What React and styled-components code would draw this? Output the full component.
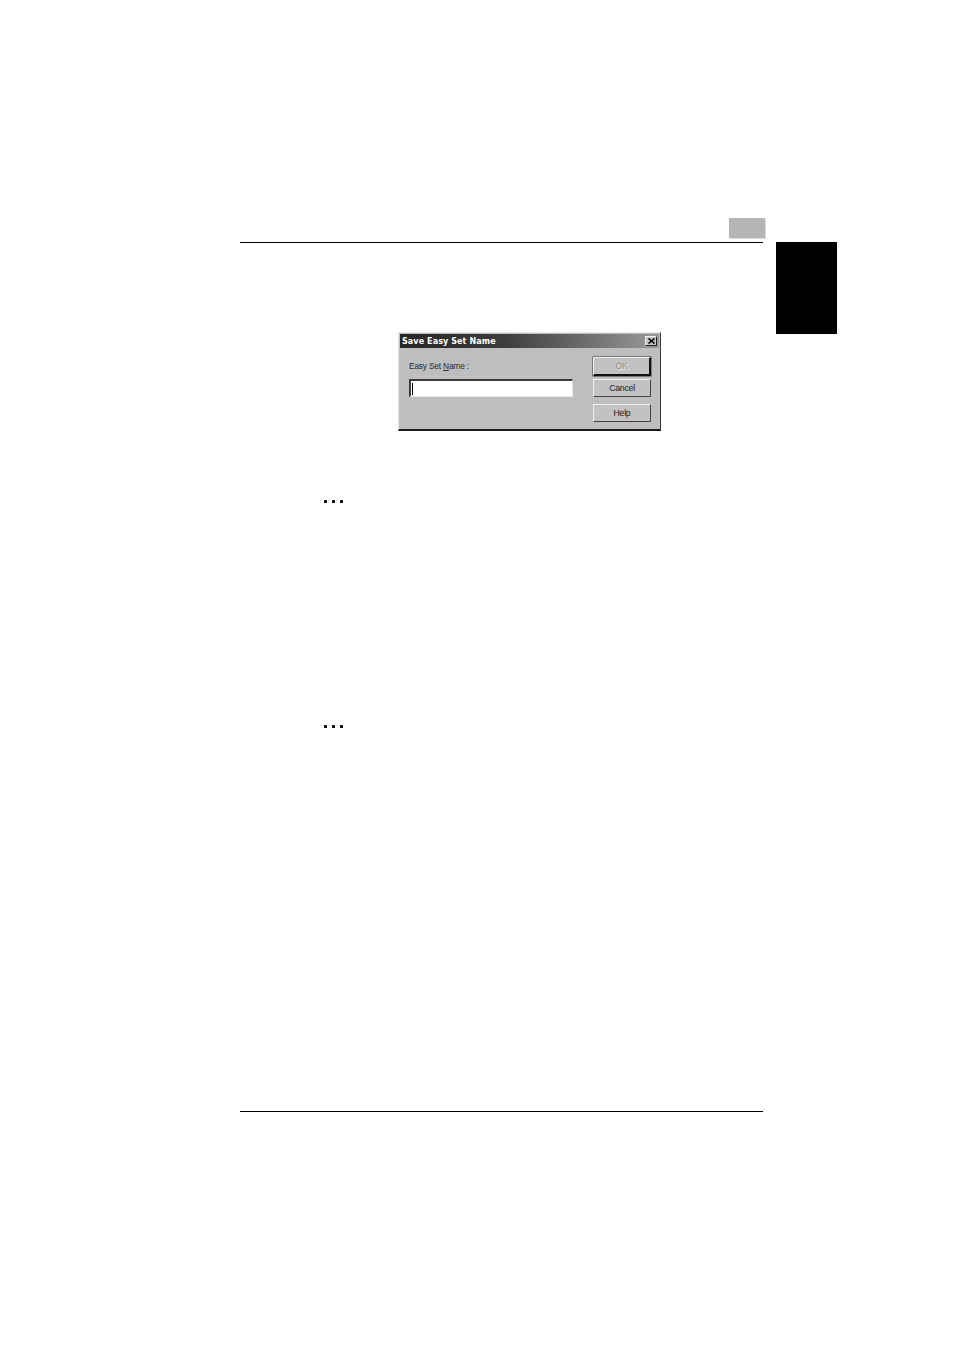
import React from 'react'
import styled, { createGlobalStyle } from 'styled-components'

const GlobalStyle = createGlobalStyle`
    html, body {
        margin: 0;
        padding: 0;
        background: #fff;
    }
    body {
        font-family: "Liberation Sans", Arial, sans-serif;
    }
`

function Dots({ second }) {
    return (
        <DotsRow $second={second}>
            <Dot />
            <Dot />
            <Dot />
        </DotsRow>
    )
}

function App() {
    return (
        <PageStyled>
            <GlobalStyle />
            <div className="column">
                <Header>
                    <PageNumberBox />
                </Header>

                <Dialog>
                    <TitleBar>
                        <span>Save Easy Set Name</span>
                        <CloseButton>
                            <svg width="7" height="6" viewBox="0 0 7 6">
                                <path d="M0.5 0.5 L6.5 5.5 M6.5 0.5 L0.5 5.5" stroke="#000" strokeWidth="1.6" />
                            </svg>
                        </CloseButton>
                    </TitleBar>
                    <DialogBody>
                        <div className="fields">
                            <Label>Easy Set <u>N</u>ame :</Label>
                            <TextInput>
                                <Caret />
                            </TextInput>
                        </div>
                        <div className="buttons">
                            <Button $default $disabled>OK</Button>
                            <Button>Cancel</Button>
                            <Button $spaced>Help</Button>
                        </div>
                    </DialogBody>
                </Dialog>

                <Dots />
                <Dots second />

                <Footer />
            </div>
            <div className="side">
                <ChapterTab />
            </div>
        </PageStyled>
    )
}

const PageStyled = styled.div`
    width: 954px;
    height: 1350px;
    display: flex;
    padding-left: 240px;
    box-sizing: border-box;
    overflow: hidden;

    .column {
        width: 523px;
        display: flex;
        flex-direction: column;
    }

    .side {
        margin-left: 13px;
        padding-top: 242px;
    }
`

const Header = styled.div`
    height: 243px;
    border-bottom: 1px solid #000;
    box-sizing: border-box;
    display: flex;
    justify-content: flex-end;
    align-items: flex-end;
    padding-bottom: 4px;
`

const PageNumberBox = styled.div`
    width: 36px;
    height: 20px;
    margin-right: -2px;
    background: #b5b5b5;
    box-shadow: 1px 1px 0 #d9d9d9;
`

const ChapterTab = styled.div`
    width: 61px;
    height: 92px;
    background: #000;
`

const Dialog = styled.div`
    margin: 89px 0 0 158px;
    width: 263px;
    height: 99px;
    box-sizing: border-box;
    background: #bebebe;
    border-top: 1px solid #e8e8e8;
    border-left: 1px solid #e8e8e8;
    border-right: 1px solid #3a3a3a;
    border-bottom: 2px solid #1a1a1a;
    padding: 1px;
    display: flex;
    flex-direction: column;
`

const TitleBar = styled.div`
    height: 14px;
    background: linear-gradient(to right, #262626 0%, #3c3c3c 40%, #9a9a9a 100%);
    display: flex;
    align-items: center;
    justify-content: space-between;
    padding: 0 2px 0 2px;

    span {
        font-family: "DejaVu Sans", Verdana, sans-serif;
        font-weight: bold;
        font-size: 8px;
        color: #fff;
        letter-spacing: 0.1px;
    }
`

const CloseButton = styled.div`
    width: 12px;
    height: 10px;
    box-sizing: border-box;
    background: #c4c4c4;
    border-top: 1px solid #f2f2f2;
    border-left: 1px solid #f2f2f2;
    border-right: 1px solid #222;
    border-bottom: 1px solid #222;
    display: flex;
    align-items: center;
    justify-content: center;
`

const DialogBody = styled.div`
    flex: 1;
    display: flex;
    justify-content: space-between;
    padding: 9px 8px 0 9px;

    .fields {
        display: flex;
        flex-direction: column;
    }

    .buttons {
        display: flex;
        flex-direction: column;
        gap: 3px;
    }
`

const Label = styled.div`
    font-size: 8.4px;
    color: #2a2a2a;
    letter-spacing: -0.2px;
    height: 12px;
    line-height: 12px;
    margin-top: 3px;

    u {
        text-decoration-thickness: 1px;
        text-underline-offset: 1px;
    }
`

const TextInput = styled.div`
    margin-top: 7px;
    width: 164px;
    height: 18px;
    box-sizing: border-box;
    background: #fff;
    border-top: 2px solid #3c3c3c;
    border-left: 2px solid #3c3c3c;
    border-right: 1px solid #e6e6e6;
    border-bottom: 1px solid #e6e6e6;
    display: flex;
    align-items: center;
    padding-left: 1px;
`

const Caret = styled.div`
    width: 1px;
    height: 12px;
    background: #000;
`

const Button = styled.div`
    width: 58px;
    height: ${p => (p.$default ? '19px' : '18px')};
    margin-top: ${p => (p.$spaced ? '4px' : '0')};
    box-sizing: border-box;
    background: #c2c2c2;
    border-top: 1px solid #f0f0f0;
    border-left: 1px solid #f0f0f0;
    border-right: ${p => (p.$default ? '2px solid #111' : '1px solid #444')};
    border-bottom: ${p => (p.$default ? '2px solid #111' : '1px solid #444')};
    box-shadow: ${p => (p.$default ? '0 0 0 0.5px #333' : 'none')};
    display: flex;
    align-items: center;
    justify-content: center;
    font-size: 8.8px;
    letter-spacing: -0.3px;
    color: ${p => (p.$disabled ? '#8a8a8a' : '#1a1a1a')};
    text-shadow: ${p => (p.$disabled ? '1px 1px 0 #eee' : 'none')};
`

const DotsRow = styled.div`
    display: flex;
    gap: 5px;
    margin-left: 84px;
    margin-top: ${p => (p.$second ? '222px' : '69px')};
`

const Dot = styled.div`
    width: 3px;
    height: 3px;
    background: #111;
    border-radius: 0.5px;
`

const Footer = styled.div`
    margin-top: 383px;
    border-bottom: 1px solid #000;
`

export default App
